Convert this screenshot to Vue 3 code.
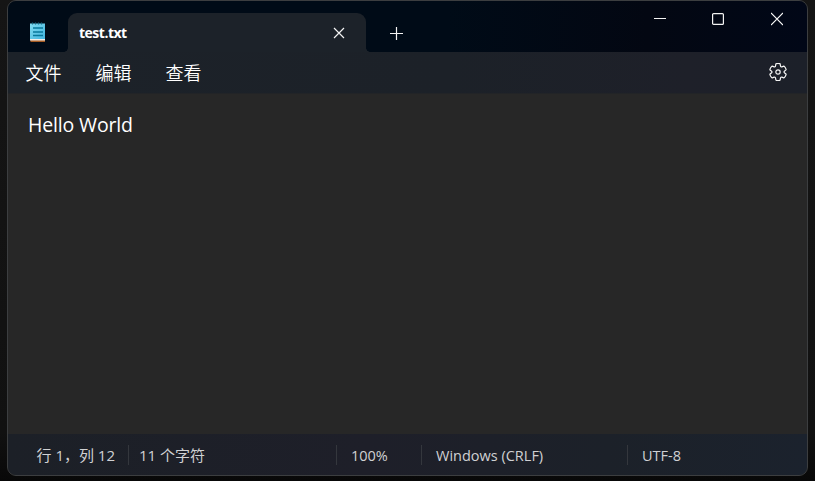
<script setup>
const menus = ['文件', '编辑', '查看']
const status = [
  { text: '行 1，列 12', name: 'position' },
  { text: '11 个字符', name: 'count' },
  { text: '100%', name: 'zoom' },
  { text: 'Windows (CRLF)', name: 'eol' },
  { text: 'UTF-8', name: 'encoding' },
]
</script>

<template>
  <div class="desktop">
    <main class="window">
      <header class="titlebar">
        <svg class="app-icon" width="16" height="20" viewBox="0 0 16 20">
          <defs>
            <linearGradient id="paper" x1="0" y1="0" x2="1" y2="1">
              <stop offset="0" stop-color="#81dcf0" />
              <stop offset="1" stop-color="#42b5df" />
            </linearGradient>
          </defs>
          <path d="M.5 17h14.5v3h-14.5z" fill="#a45b23" />
          <path d="M0 16.500h15v2H0z" fill="#f1eee8" />
          <path d="M0 1.5h15v15.500H0z" fill="url(#paper)" />
          <path d="M2.500 .5v2M5.500 .5v2M8.500 .5v2M11.500 .5v2" stroke="#176982" stroke-width="1.2" />
          <path d="M3 6h10M3 10h10M3 13.500h10" stroke="#087a9c" stroke-width="1.6" />
        </svg>
        <div class="tab">
          <span class="tab-title">test.txt</span>
          <svg width="12" height="12" viewBox="0 0 12 12"><path d="M1 1l10 10M11 1L1 11" /></svg>
        </div>
        <svg class="add" width="13" height="13" viewBox="0 0 13 13"><path d="M0 6.5h13M6.5 0v13" /></svg>
        <div class="controls">
          <svg class="minimize" width="12" height="14" viewBox="0 0 12 14"><path d="M0 6.5h12" /></svg>
          <svg width="12" height="14" viewBox="0 0 12 14"><rect x=".6" y="1.6" width="10.8" height="10.8" rx="1" /></svg>
          <svg width="12" height="14" viewBox="0 0 12 14"><path d="M0 1l12 12M12 1L0 13" /></svg>
        </div>
      </header>
      <nav class="menubar">
        <span v-for="m in menus" :key="m">{{ m }}</span>
        <svg class="gear" width="20" height="20" viewBox="0 0 20 20">
          <path d="M1.91 7.38A8.5 8.5 0 0 1 3.7 4.3a.5.5 0 0 1 .54-.13l1.92.68a1 1 0 0 0 1.32-.76l.36-2a.5.5 0 0 1 .4-.4 8.53 8.53 0 0 1 3.55 0c.2.04.35.2.38.4l.37 2a1 1 0 0 0 1.32.76l1.92-.68a.5.5 0 0 1 .54.13 8.5 8.5 0 0 1 1.78 3.08c.06.2 0 .4-.15.54l-1.56 1.32a1 1 0 0 0 0 1.52l1.56 1.32a.5.5 0 0 1 .15.54 8.5 8.5 0 0 1-1.78 3.08.5.5 0 0 1-.54.13l-1.92-.68a1 1 0 0 0-1.32.76l-.37 2a.5.5 0 0 1-.38.4 8.53 8.53 0 0 1-3.56 0 .5.5 0 0 1-.39-.4l-.36-2a1 1 0 0 0-1.32-.76l-1.92.68a.5.5 0 0 1-.54-.13 8.5 8.5 0 0 1-1.78-3.08.5.5 0 0 1 .15-.54l1.56-1.32a1 1 0 0 0 0-1.52L2.06 7.92a.5.5 0 0 1-.15-.54Z" />
          <circle cx="10" cy="10" r="2.2" />
        </svg>
      </nav>
      <section class="editor">Hello World</section>
      <footer class="statusbar">
        <div v-for="s in status" :key="s.name" class="cell" :class="s.name"><span>{{ s.text }}</span></div>
      </footer>
    </main>
  </div>
</template>

<style>
body { background: #101010; }
</style>

<style scoped>
.desktop {
  box-sizing: border-box;
  height: 481px;
  padding: 0 7px 5px;
  background: linear-gradient(#151515, #111 90%, #080808);
  font-family: "Open Sans", "Noto Sans CJK SC", sans-serif;
}
.window {
  box-sizing: border-box;
  height: 476px;
  display: flex;
  flex-direction: column;
  border: 1px solid #3c3e40;
  border-radius: 9px;
  overflow: hidden;
  background: #272727;
}
svg { flex: none; fill: none; stroke: #f3f3f3; stroke-width: 1.2; }
.titlebar {
  height: 51px;
  flex: none;
  display: flex;
  background: linear-gradient(90deg, #000b17, #000b17 55%, #030712 80%, #010717);
}
.app-icon { margin: 21px 0 0 22px; stroke: none; }
.tab {
  position: relative;
  box-sizing: border-box;
  width: 298px;
  height: 39px;
  margin: 12px 0 0 22px;
  padding: 0 21px 0 11px;
  display: flex;
  align-items: center;
  justify-content: space-between;
  border-radius: 9px 9px 0 0;
  background: #1c2229;
}
.tab::before, .tab::after {
  content: "";
  position: absolute;
  bottom: 0;
  width: 4px;
  height: 4px;
}
.tab::before { left: -4px; background: radial-gradient(circle at 0 0, transparent 3.5px, #1c2229 4px); }
.tab::after { right: -4px; background: radial-gradient(circle at 100% 0, transparent 3.5px, #1c2229 4px); }
.tab-title { color: #fff; font-size: 14px; font-weight: 700; letter-spacing: -0.5px; line-height: 20px; }
.add { margin: 26px 0 0 24px; }
.controls { display: flex; gap: 47px; margin: 11px 24px 0 auto; }
.minimize { margin-right: -1px; }
.menubar {
  box-sizing: border-box;
  height: 42px;
  flex: none;
  display: flex;
  align-items: center;
  gap: 34px;
  padding: 0 19px 0 17.5px;
  background: linear-gradient(90deg, #1c2229, #1c2128 55%, #1e2029 85%, #1c2029);
  border-bottom: 1px solid #222427;
  color: #fff;
  font-size: 18px;
  font-weight: 350;
  line-height: 26px;
}
.gear { margin: 0 0 1px auto; }
.editor {
  flex: 1;
  padding: 17px 20px;
  color: #fff;
  font-size: 19.5px;
  letter-spacing: -0.15px;
  line-height: 28px;
}
.statusbar {
  box-sizing: border-box;
  height: 41px;
  flex: none;
  display: flex;
  align-items: center;
  padding-left: 18px;
  background: linear-gradient(90deg, #1c2027, #1e1f29 45%, #1c2129 75%, #1b222d);
  color: #d0d1d3;
  font-size: 14.5px;
  line-height: 22px;
  white-space: pre;
}
.cell { box-sizing: border-box; height: 20px; border-left: 1px solid #34373d; }
.position { width: 102px; padding-left: 9.5px; border-left-color: transparent; font-size: 15px; line-height: 20px; }
.count { width: 208px; padding-left: 10px; font-size: 15px; line-height: 20px; }
.zoom { width: 85px; padding-left: 14px; }
.eol { width: 206px; padding-left: 14px; }
.encoding { padding-left: 14px; }
</style>
